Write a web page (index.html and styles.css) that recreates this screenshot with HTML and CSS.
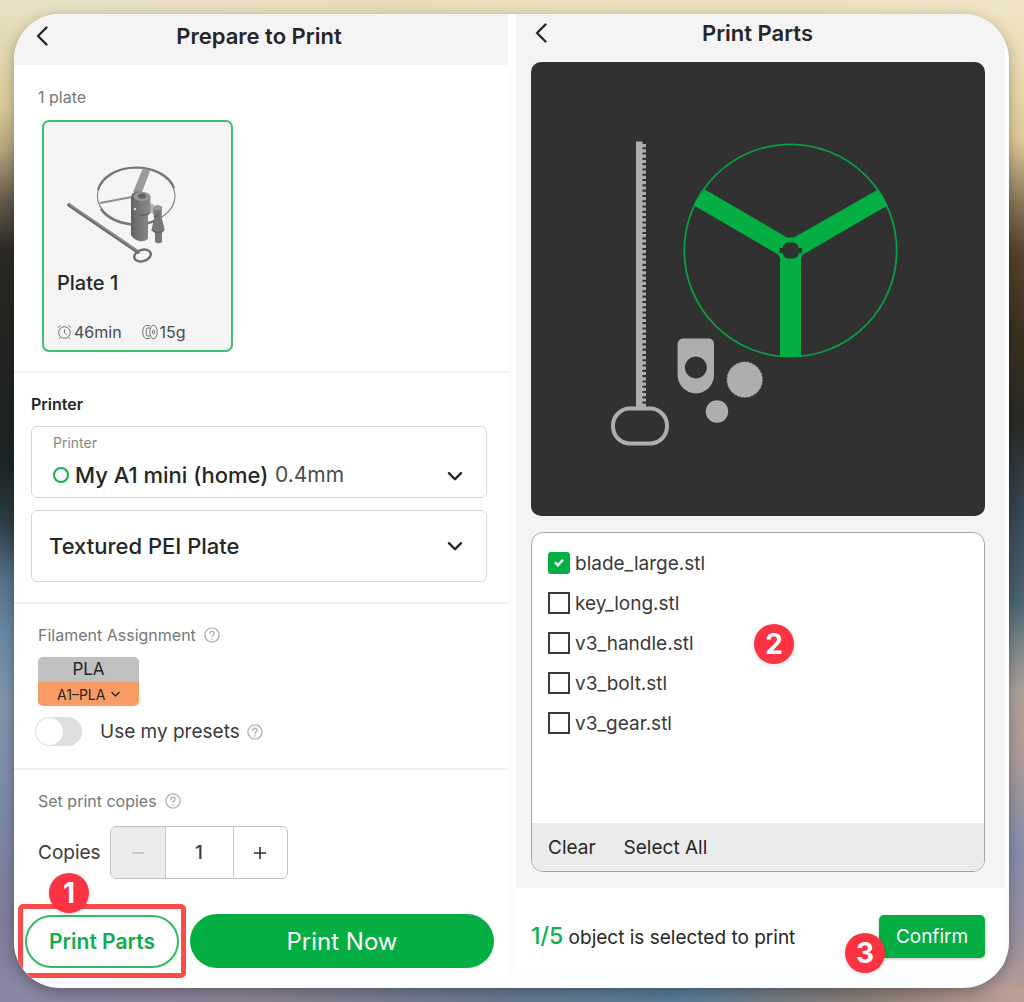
FILE: index.html
```html
<!DOCTYPE html>
<html lang="en">
<head>
<meta charset="utf-8">
<meta name="viewport" content="width=device-width, initial-scale=1">
<title>Prepare to Print</title>
<link rel="stylesheet" href="styles.css">
</head>
<body>
<svg class="defs" aria-hidden="true">
  <symbol id="back" viewBox="0 0 12 20"><path d="M10.500 1.500 2 10l8.500 8.500" fill="none" stroke="currentColor" stroke-width="2.400" stroke-linecap="round" stroke-linejoin="round"/></symbol>
  <symbol id="down" viewBox="0 0 14 10"><path d="M1.500 2 7 7.500 12.500 2" fill="none" stroke="currentColor" stroke-width="2.200" stroke-linecap="round" stroke-linejoin="round"/></symbol>
  <symbol id="help" viewBox="0 0 16 16"><circle cx="8" cy="8" r="7.100" fill="none" stroke="currentColor" stroke-width="1.400"/><path d="M5.900 6.400c0-1.300.9-2.100 2.100-2.100s2.100.8 2.100 1.900c0 1.500-2.100 1.600-2.100 3.300" fill="none" stroke="currentColor" stroke-width="1.400" stroke-linecap="round"/><circle cx="8" cy="11.800" r=".9" fill="currentColor"/></symbol>
</svg>

<main class="sheet">
  <section class="screen prepare">
    <header class="bar">
      <button class="back" type="button" aria-label="Back"><svg width="12" height="20"><use href="#back"/></svg></button>
      <h1>Prepare to Print</h1>
    </header>

    <div class="block plates">
      <p class="caption">1 plate</p>
      <article class="plate">
        <svg class="thumb" viewBox="57 160 160 108" aria-hidden="true">
          <defs>
            <linearGradient id="body" x1="0" x2="1"><stop offset="0" stop-color="#5f5f5f"/><stop offset=".35" stop-color="#747474"/><stop offset="1" stop-color="#8b8b8b"/></linearGradient>
          </defs>
          <path d="M100 203 132 197" stroke="#8c8c8c" stroke-width="2"/>
          <ellipse cx="136.200" cy="196" rx="38.800" ry="28" fill="none" stroke="#858585" stroke-width="1.200"/>
          <path d="M98 190C102 176 118 167.500 136 167.500S170 176 174 188" fill="none" stroke="#757575" stroke-width="2.200"/>
          <path d="M101 209C107 218 120 224.500 136 224.500C144 224.500 152 223 158 219" fill="none" stroke="#757575" stroke-width="2.400"/>
          <path d="M143 168 150 171 142 192 133 192Z" fill="#9a9a9a"/>
          <path d="M69 205 138 252" stroke="#6c6c6c" stroke-width="3.600" stroke-linecap="round"/>
          <path d="M70 204.500 138 251" stroke="#989898" stroke-width="1.200" stroke-linecap="round"/>
          <ellipse cx="142.500" cy="255.500" rx="8.500" ry="5.600" fill="none" stroke="#6f6f6f" stroke-width="2.400" transform="rotate(-18 142.500 255.500)"/>
          <path d="M149 203 155 205 153 214 149 212Z" fill="#b5b5b5"/>
          <path d="M131 197Q132 191 139 191.500Q148 192 150.500 197V212Q150 214 148 215V238Q146 242 139 241Q133 239 131 235Z" fill="url(#body)"/>
          <path d="M139 215Q145 216.500 150 213" stroke="#555" fill="none"/>
          <ellipse cx="142" cy="196.500" rx="8.500" ry="4.600" fill="#969696"/>
          <ellipse cx="142" cy="196" rx="4" ry="2.600" fill="#606060"/>
          <circle cx="135" cy="209" r="1.200" fill="#ddd"/>
          <path d="M153 208Q157 203 162 207L161.500 217 164.500 229 162 233V242Q158.500 244.500 155 242V233L151.500 230 154 219Z" fill="#777"/>
          <ellipse cx="157.500" cy="208" rx="4" ry="2.600" fill="#969696"/>
          <path d="M151.500 230Q158 235 164.500 230M155 217 160 214" fill="none" stroke="#575757"/>
        </svg>
        <h2>Plate 1</h2>
        <div class="facts">
          <span class="fact"><svg width="15" height="16" viewBox="0 0 15 16" fill="none" stroke="#6e6e6e"><circle cx="7.500" cy="8.500" r="5.800"/><path d="M7.500 5.500v3.200l2 2M1 3.500 3.500 1.500M14 3.500 11.500 1.500M3 13.500l-1 1.500M12 13.500l1 1.500"/></svg>46min</span>
          <span class="fact"><svg width="16" height="16" viewBox="0 0 16 16" fill="none" stroke="#6e6e6e"><path d="M5 1.500C2.500 1 .8 4 .8 8S2.500 15 5 14.500"/><path d="M8 4H5C3.800 5.500 3.800 10.500 5 12H8"/><path d="M8 1.500H5M8 14.500H5"/><ellipse cx="11.500" cy="8" rx="3.700" ry="6.800"/><ellipse cx="11.500" cy="8" rx="1" ry="2"/></svg>15g</span>
        </div>
      </article>
    </div>

    <div class="block printer">
      <h3>Printer</h3>
      <div class="field field-labelled">
        <div class="field-main">
          <label for="printer">Printer</label>
          <div class="device"><span class="ring"></span><select id="printer"><option>My A1 mini (home)</option></select><span class="nozzle">0.4mm</span></div>
        </div>
        <svg class="chevron" width="16" height="11"><use href="#down"/></svg>
      </div>
      <div class="field">
        <select class="wide" aria-label="Plate type"><option>Textured PEI Plate</option></select>
        <svg class="chevron" width="16" height="11"><use href="#down"/></svg>
      </div>
    </div>

    <div class="block filament">
      <p class="caption">Filament Assignment <svg class="help" width="16" height="16"><use href="#help"/></svg></p>
      <div class="chip">
        <span class="chip-top">PLA</span>
        <span class="chip-bottom"><select aria-label="Filament slot"><option>A1–PLA</option></select><svg width="9" height="7"><use href="#down"/></svg></span>
      </div>
      <div class="presets">
        <input id="presets" class="switch" type="checkbox" role="switch">
        <label for="presets">Use my presets</label>
        <svg class="help" width="16" height="16"><use href="#help"/></svg>
      </div>
    </div>

    <div class="block copies">
      <p class="caption">Set print copies <svg class="help" width="16" height="16"><use href="#help"/></svg></p>
      <div class="copies-row">
        <label for="copies">Copies</label>
        <div class="stepper">
          <button type="button" disabled aria-label="Fewer"><svg width="14" height="14" viewBox="0 0 14 14"><path d="M1 7h12" stroke="currentColor" stroke-width="1.600"/></svg></button>
          <input id="copies" type="text" inputmode="numeric" value="1">
          <button type="button" aria-label="More"><svg width="14" height="14" viewBox="0 0 14 14"><path d="M1 7h12M7 1v12" stroke="currentColor" stroke-width="1.600"/></svg></button>
        </div>
      </div>
    </div>

    <div class="actions">
      <div class="callout">
        <button class="outline" type="button">Print Parts</button>
        <span class="badge badge-one">1</span>
      </div>
      <button class="primary" type="button">Print Now</button>
    </div>
  </section>

  <section class="screen parts">
    <header class="bar">
      <button class="back" type="button" aria-label="Back"><svg width="12" height="20"><use href="#back"/></svg></button>
      <h1>Print Parts</h1>
    </header>

    <svg class="preview" viewBox="531 62 454 454" role="img" aria-label="Plate preview">
      <g fill="#aeaeae">
        <path d="M636 141.500H642.500V408H636Z"/>
        <path d="M644 144V407" stroke="#aeaeae" stroke-width="4" stroke-dasharray="3.200 2.100"/>
        <rect x="613" y="408.500" width="54" height="35" rx="17" fill="none" stroke="#aeaeae" stroke-width="4"/>
        <path fill-rule="evenodd" d="M683 338.500H709Q714 339 714 344V375A18.200 18.500 0 0 1 677.600 375V344Q678 339 683 338.500ZM695.800 356.500a11 11 0 1 0 .1 0Z"/>
        <circle cx="744.700" cy="379.700" r="17.600"/>
        <circle cx="744.700" cy="379.700" r="17.700" fill="none" stroke="#aeaeae" stroke-width=".8" stroke-dasharray="2 1.700"/>
        <circle cx="717" cy="411.500" r="11.200"/>
      </g>
      <g fill="#03ae42">
        <circle cx="790.500" cy="250.500" r="106.200" fill="none" stroke="#0a9f42" stroke-width="1.800"/>
        <path d="M705 189.500 787 237.500H794L878 189.500Q884 197 887.500 205.500L803 254.500 801 258V357H780V258L778 254.500 694 205.500Q698 196 705 189.500Z"/>
      </g>
      <path fill="#313131" d="M782.500 248Q784 243 788 242.500H793.500Q797.500 243 799 248H802V253H799Q797.500 258 793.500 258.500H788Q784 258 782.500 253H779.500V248Z"/>
    </svg>

    <div class="list">
      <div class="rows">
        <label class="row"><input type="checkbox" checked>blade_large.stl</label>
        <label class="row"><input type="checkbox">key_long.stl</label>
        <label class="row"><input type="checkbox">v3_handle.stl</label>
        <label class="row"><input type="checkbox">v3_bolt.stl</label>
        <label class="row"><input type="checkbox">v3_gear.stl</label>
        <span class="badge badge-two">2</span>
      </div>
      <div class="tools">
        <button type="button">Clear</button>
        <button type="button">Select All</button>
      </div>
    </div>

    <footer class="summary">
      <p><strong>1/5</strong> object is selected to print</p>
      <div class="confirm-wrap">
        <button class="confirm" type="button">Confirm</button>
        <span class="badge badge-three">3</span>
      </div>
    </footer>
  </section>
</main>
</body>
</html>
```
FILE: styles.css
```css
* {
  box-sizing: border-box;
}

body {
  margin: 0;
  min-height: 100vh;
  padding: 14px 15px 14px 14px;
  display: flex;
  font-family: Inter, "Liberation Sans", sans-serif;
  color: #262626;
  background:
    linear-gradient(90deg, #e6dfc4 0%, #e8dcb9 40%, #ecdfbd 70%, #efe3c5 100%) top / 100% 14px no-repeat,
    linear-gradient(90deg, #8986a4 0%, #8a8293 25%, #66798f 50%, #5a7c98 66%, #8a7d76 84%, #bda195 100%) bottom / 100% 14px no-repeat,
    linear-gradient(#e7dfc2 0%, #e2d6ad 6%, #d8c896 11%, #b5a57e 15%, #655b4c 20%, #2c2926 25%, #222421 36%, #1b2525 46%, #2d3c45 52%, #56748b 58%, #6889a4 63%, #8294ac 70%, #7c89a7 82%, #817d99 92%, #8a86a6 100%) left / 50% 100% no-repeat,
    linear-gradient(#efe3c5 0%, #eadcb2 7%, #decb98 14%, #8a7b5b 20%, #57442c 25%, #3c3120 33%, #292b26 42%, #35424f 50%, #4c6475 60%, #838b8d 65%, #aea199 69%, #ad9d96 75%, #868dac 85%, #968fa3 92%, #b99e94 100%) right / 50% 100% no-repeat;
}

h1, h2, h3, p {
  margin: 0;
}

button, input, select {
  font: inherit;
  color: inherit;
  margin: 0;
  padding: 0;
  border: 0;
  background: none;
}

select {
  appearance: none;
  outline: 0;
}

svg {
  display: block;
  flex: none;
}

.defs {
  position: absolute;
  width: 0;
  height: 0;
}

.sheet {
  flex: 1;
  display: grid;
  grid-template-columns: 494fr 489fr;
  column-gap: 8px;
  padding: 0 4px 6px 0;
  border-radius: 46px;
  overflow: hidden;
  background: #fbfdff;
  box-shadow: 0 4px 14px rgba(0, 0, 0, .3);
}

.screen {
  display: flex;
  flex-direction: column;
  min-width: 0;
}

.bar {
  display: grid;
  grid-template-columns: 40px 1fr 40px;
  align-items: center;
  background: #f4f4f4;
}

.bar h1 {
  font-size: 22px;
  line-height: 28px;
  font-weight: 600;
  text-align: center;
}

.prepare .bar {
  height: 51px;
  padding: 0 22px 8px 18px;
}

.prepare {
  background: #fff;
}

.back {
  display: flex;
  padding: 0 4px;
}

.block {
  border-bottom: 2px solid #f2f2f2;
}

.caption {
  display: flex;
  align-items: center;
  gap: 8px;
  padding-left: 24px;
  font-size: 16px;
  line-height: 20px;
  color: #777;
}

.help {
  color: #b4b4b4;
}

.plates {
  padding: 22px 28px 19px 0;
}

.plate {
  width: 191px;
  margin: 13px 0 0 28px;
  padding: 38px 13px 8px;
  border: 2px solid #3fbf70;
  border-radius: 7px;
  background: #f4f4f4;
}

.thumb {
  width: 160px;
  height: 108px;
}

.plate h2 {
  margin-top: 2px;
  font-size: 20px;
  line-height: 26px;
  font-weight: 500;
}

.facts {
  display: flex;
  gap: 20px;
  margin-top: 26px;
  font-size: 16px;
  line-height: 20px;
  color: #4a4a4a;
}

.fact {
  display: flex;
  align-items: center;
  gap: 2px;
}

.printer {
  padding: 21px 21px 20px 17px;
}

.printer h3 {
  font-size: 16px;
  line-height: 20px;
  font-weight: 600;
}

.field {
  display: flex;
  align-items: center;
  height: 72px;
  margin-top: 12px;
  padding: 0 23px 0 17px;
  border: 1px solid #d8d8d8;
  border-radius: 6px;
}

.field-labelled {
  padding: 9px 23px 9px 21px;
  align-items: flex-end;
}

.field-labelled .chevron {
  margin-bottom: 6px;
}

.field-main {
  flex: 1;
}

.field label {
  display: block;
  font-size: 14px;
  line-height: 18px;
  color: #888;
}

.device {
  display: flex;
  align-items: center;
  margin-top: 10px;
  font-size: 22px;
  line-height: 26px;
  height: 26px;
}

.ring {
  width: 16px;
  height: 16px;
  margin-right: 6px;
  border: 2px solid #10b24c;
  border-radius: 50%;
}

.device select {
  font-weight: 500;
}

.nozzle {
  margin-left: 6px;
  font-size: 21px;
  color: #4c4c4c;
}

.wide {
  flex: 1;
  font-size: 22px;
  font-weight: 500;
}

.filament {
  padding: 21px 21px 22px 0;
}

.chip {
  width: 101px;
  margin: 12px 0 0 24px;
  border-radius: 5px;
  overflow: hidden;
  text-align: center;
}

.chip-top {
  display: block;
  font-size: 17px;
  line-height: 25px;
  background: #c0c0c0;
}

.chip-bottom {
  display: flex;
  align-items: center;
  justify-content: center;
  gap: 5px;
  height: 24px;
  font-size: 14px;
  background: #f99b64;
}

.presets {
  display: flex;
  align-items: center;
  margin: 11px 0 0 21px;
  font-size: 19px;
  color: #3a3a3a;
}

.presets label {
  margin: 0 7px 0 18px;
}

.switch {
  appearance: none;
  width: 47px;
  height: 29px;
  padding: 1px;
  border-radius: 15px;
  background: #dedede;
}

.switch::before {
  content: "";
  display: block;
  width: 27px;
  height: 27px;
  border-radius: 50%;
  background: #fff;
}

.switch:checked::before {
  margin-left: auto;
}

.copies {
  padding-top: 21px;
  border: 0;
}

.copies-row {
  display: flex;
  align-items: center;
  gap: 11px;
  margin-top: 15px;
  padding-left: 24px;
  font-size: 19px;
  color: #3a3a3a;
}

.copies-row label {
  width: 61px;
}

.stepper {
  display: flex;
  width: 178px;
  height: 53px;
  border: 1px solid #c0c0c0;
  border-radius: 6px;
  overflow: hidden;
}

.stepper button {
  flex: 1;
  display: flex;
  align-items: center;
  justify-content: center;
  color: #333;
}

.stepper button:disabled {
  background: #ebebeb;
  color: #bcbcbc;
}

.stepper input {
  width: 69px;
  border: solid #c8c8c8;
  border-width: 0 1px;
  text-align: center;
  font-weight: 500;
}

.actions {
  display: flex;
  align-items: center;
  gap: 4px;
  margin-top: 25px;
  padding: 0 14px 0 4px;
}

.callout {
  position: relative;
  padding: 6px 2px 5px;
  border: 5px solid #fc4b48;
  border-radius: 5px;
}

.outline {
  display: block;
  width: 154px;
  height: 53px;
  border: 2px solid #36b864;
  border-radius: 27px;
  font-size: 21px;
  font-weight: 600;
  color: #10ae49;
}

.primary {
  flex: 1;
  height: 54px;
  border-radius: 27px;
  background: #03ae42;
  color: #fff;
  font-size: 24px;
}

.badge {
  position: absolute;
  width: 40px;
  height: 40px;
  border-radius: 50%;
  background: #fb3342;
  color: #fff;
  font-size: 28px;
  line-height: 40px;
  font-weight: 700;
  text-align: center;
  box-shadow: 0 1px 4px rgba(0, 0, 0, .15);
}

.badge-one {
  left: 26px;
  top: -36px;
}

.parts {
  background: #f4f4f4;
  margin-bottom: 14px;
}

.parts .bar {
  height: 48px;
  padding: 0 21px 10px 15px;
}

.preview {
  width: auto;
  margin: 0 20px 0 15px;
  aspect-ratio: 1;
  border-radius: 10px;
  background: #313131;
}

.list {
  display: flex;
  flex-direction: column;
  flex: 1;
  margin: 16px 20px 16px 15px;
  border: 1px solid #a4a4a4;
  border-radius: 12px;
  background: #fff;
  overflow: hidden;
}

.rows {
  position: relative;
  flex: 1;
  padding: 10px 16px;
}

.row {
  display: flex;
  align-items: center;
  gap: 5px;
  height: 40px;
  font-size: 19px;
  color: #3a3a3a;
}

.row input {
  appearance: none;
  width: 22px;
  height: 22px;
  border: 2px solid #3a3a3a;
}

.row input:checked {
  border: 0;
  border-radius: 3px;
  background: #03ae42;
}

.row input:checked::after {
  content: "";
  display: block;
  width: 10px;
  height: 8px;
  margin: 7px 6px;
  background: #fff;
  clip-path: polygon(0 50%, 18% 30%, 38% 55%, 82% 0, 100% 20%, 40% 100%);
}

.badge-two {
  left: 222px;
  top: 91px;
}

.tools {
  display: flex;
  align-items: center;
  gap: 28px;
  height: 48px;
  padding: 0 16px;
  background: #ebebeb;
  font-size: 19px;
}

.summary {
  display: flex;
  align-items: center;
  justify-content: space-between;
  height: 80px;
  padding: 0 20px 0 15px;
  background: #fff;
}

.summary p {
  padding-top: 18px;
  font-size: 19px;
  line-height: 24px;
}

.summary strong {
  font-size: 23px;
  font-weight: 500;
  color: #10ae49;
}

.confirm-wrap {
  position: relative;
  padding-top: 16px;
}

.confirm {
  width: 106px;
  height: 43px;
  border-radius: 5px;
  background: #03ae42;
  box-shadow: 0 1px 3px rgba(0, 0, 0, .25);
  color: #fff;
  font-size: 19px;
}

.badge-three {
  left: -34px;
  top: 34px;
}
```
